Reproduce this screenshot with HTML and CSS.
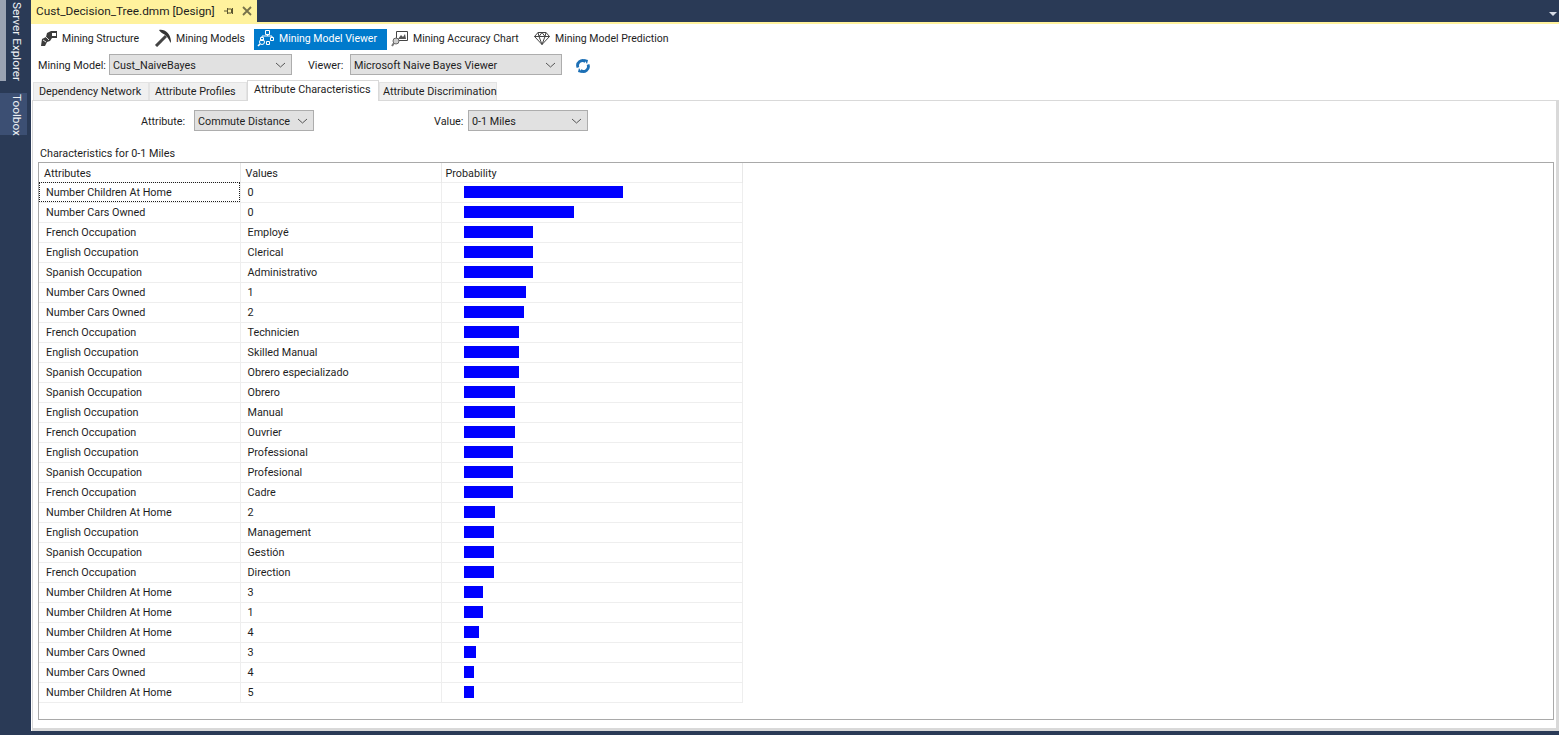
FILE: index.html
```html
<!DOCTYPE html>
<html lang="en">
<head>
    <meta charset="UTF-8">
    <title>Cust_Decision_Tree.dmm [Design]</title>
    <link rel="stylesheet" href="styles.css">
</head>
<body>
<aside class="rail">
    <div class="rail-tab rail-tab-server"><span class="rail-label">Server Explorer</span></div>
    <div class="rail-tab rail-tab-toolbox"><span class="rail-label">Toolbox</span></div>
</aside>

<div class="shell">
    <header class="doc-bar">
        <div class="doc-tab">
            <span class="doc-title">Cust_Decision_Tree.dmm [Design]</span>
            <svg class="doc-pin" width="10" height="10" viewBox="0 0 10 10"><path d="M0 5h3M3.500 2v6M3.500 3h4v4h-4M8.500 2v6" fill="none" stroke="#5b5530"/></svg>
            <svg class="doc-close" width="10" height="10" viewBox="0 0 10 10"><path d="M1 1l8 8M9 1l-8 8" stroke="#77714a" stroke-width="1.800"/></svg>
        </div>
        <div class="doc-menu"></div>
    </header>

    <main class="designer">
        <nav class="mode-bar">
            <div class="mode mode-structure">
                <svg width="18" height="18" viewBox="0 0 18 18"><path d="M1 17l1-7 4-2 1-4 4-2h6v7h-5l-2 3-3 1-2 4z" fill="#3c3c3c"/><path d="M12 4h4v3h-4z" fill="#fff"/><path d="M3 11l3 2M6 8l3 3" stroke="#ddd"/></svg>
                <span>Mining Structure</span>
            </div>
            <div class="mode mode-models">
                <svg width="18" height="18" viewBox="0 0 18 18"><path d="M2 17L12 7" stroke="#444" stroke-width="3"/><path d="M5 1c6-1 11 3 12 11l-.5 2c-2-5-4-7-6-8.500C8 4 6 3 5 1z" fill="#333"/></svg>
                <span>Mining Models</span>
            </div>
            <div class="mode mode-viewer">
                <svg width="18" height="18" viewBox="0 0 18 18" fill="none" stroke="#fff"><path d="M8.500 1.500h4v4h-4zM3.500 8.500h3v3h-3zM13.500 8.500h3v3h-3zM10.500 5.500v1.500M5 8.500V7h10v1.500M9.500 12.500h3v3h-3z"/><circle cx="5" cy="13" r="2.500"/><path d="M3 15l-2 2" stroke-width="1.600"/></svg>
                <span>Mining Model Viewer</span>
            </div>
            <div class="mode mode-accuracy">
                <svg width="18" height="18" viewBox="0 0 18 18"><path d="M5.500 2.500h11v9h-11z" fill="#fff" stroke="#444"/><path d="M7 10l3-4 2 2 2-3 1 5z" fill="#555"/><circle cx="5" cy="12" r="3" fill="#ccc" stroke="#666"/><path d="M3 14l-2 3" stroke="#777" stroke-width="2"/></svg>
                <span>Mining Accuracy Chart</span>
            </div>
            <div class="mode mode-prediction">
                <svg width="18" height="18" viewBox="0 0 18 18" fill="none" stroke="#444"><path d="M5 3.500h8l3.500 4L9 15.500 1.500 7.500z"/><path d="M1.500 7.500h15M6 7.500l3 8 3-8M5 3.500l1 4 3-4 3 4 1-4"/></svg>
                <span>Mining Model Prediction</span>
            </div>
        </nav>

        <div class="model-bar">
            <label class="model-label">Mining Model:</label>
            <div class="combo combo-model"><span>Cust_NaiveBayes</span><svg class="chev" width="11" height="6" viewBox="0 0 11 6"><path d="M1 1l4.500 4L10 1" fill="none" stroke="#555"/></svg></div>
            <label class="viewer-label">Viewer:</label>
            <div class="combo combo-viewer"><span>Microsoft Naive Bayes Viewer</span><svg class="chev" width="11" height="6" viewBox="0 0 11 6"><path d="M1 1l4.500 4L10 1" fill="none" stroke="#555"/></svg></div>
            <svg class="refresh" width="14" height="14" viewBox="0 0 14 14" fill="none" stroke="#1c6fb5" stroke-width="2.800"><path d="M2 8.500A5 5 0 0 1 9.500 2.500M12 5.500A5 5 0 0 1 4.500 11.500"/><path d="M8 0l4 1-1 4zM6 14l-4-1 1-4z" fill="#1c6fb5" stroke="none"/></svg>
        </div>

        <div class="tabs">
            <div class="tab tab-network">Dependency Network</div>
            <div class="tab tab-profiles">Attribute Profiles</div>
            <div class="tab tab-active">Attribute Characteristics</div>
            <div class="tab tab-discrimination">Attribute Discrimination</div>
        </div>

        <section class="panel">
            <div class="filter-bar">
                <label class="attr-label">Attribute:</label>
                <div class="combo combo-attr"><span>Commute Distance</span><svg class="chev" width="11" height="6" viewBox="0 0 11 6"><path d="M1 1l4.500 4L10 1" fill="none" stroke="#555"/></svg></div>
                <label class="value-label">Value:</label>
                <div class="combo combo-value"><span>0-1 Miles</span><svg class="chev" width="11" height="6" viewBox="0 0 11 6"><path d="M1 1l4.500 4L10 1" fill="none" stroke="#555"/></svg></div>
            </div>
            <div class="caption">Characteristics for 0-1 Miles</div>
            <div class="grid-frame">
                <table class="grid">
                    <thead>
                    <tr><th>Attributes</th><th>Values</th><th>Probability</th></tr>
                    </thead>
                    <tbody>
                    <tr class="current"><td>Number Children At Home</td><td>0</td><td><div class="bar" style="width:159px"></div></td></tr>
                    <tr><td>Number Cars Owned</td><td>0</td><td><div class="bar" style="width:110px"></div></td></tr>
                    <tr><td>French Occupation</td><td>Employé</td><td><div class="bar" style="width:69px"></div></td></tr>
                    <tr><td>English Occupation</td><td>Clerical</td><td><div class="bar" style="width:69px"></div></td></tr>
                    <tr><td>Spanish Occupation</td><td>Administrativo</td><td><div class="bar" style="width:69px"></div></td></tr>
                    <tr><td>Number Cars Owned</td><td>1</td><td><div class="bar" style="width:62px"></div></td></tr>
                    <tr><td>Number Cars Owned</td><td>2</td><td><div class="bar" style="width:60px"></div></td></tr>
                    <tr><td>French Occupation</td><td>Technicien</td><td><div class="bar" style="width:55px"></div></td></tr>
                    <tr><td>English Occupation</td><td>Skilled Manual</td><td><div class="bar" style="width:55px"></div></td></tr>
                    <tr><td>Spanish Occupation</td><td>Obrero especializado</td><td><div class="bar" style="width:55px"></div></td></tr>
                    <tr><td>Spanish Occupation</td><td>Obrero</td><td><div class="bar" style="width:51px"></div></td></tr>
                    <tr><td>English Occupation</td><td>Manual</td><td><div class="bar" style="width:51px"></div></td></tr>
                    <tr><td>French Occupation</td><td>Ouvrier</td><td><div class="bar" style="width:51px"></div></td></tr>
                    <tr><td>English Occupation</td><td>Professional</td><td><div class="bar" style="width:49px"></div></td></tr>
                    <tr><td>Spanish Occupation</td><td>Profesional</td><td><div class="bar" style="width:49px"></div></td></tr>
                    <tr><td>French Occupation</td><td>Cadre</td><td><div class="bar" style="width:49px"></div></td></tr>
                    <tr><td>Number Children At Home</td><td>2</td><td><div class="bar" style="width:31px"></div></td></tr>
                    <tr><td>English Occupation</td><td>Management</td><td><div class="bar" style="width:30px"></div></td></tr>
                    <tr><td>Spanish Occupation</td><td>Gestión</td><td><div class="bar" style="width:30px"></div></td></tr>
                    <tr><td>French Occupation</td><td>Direction</td><td><div class="bar" style="width:30px"></div></td></tr>
                    <tr><td>Number Children At Home</td><td>3</td><td><div class="bar" style="width:19px"></div></td></tr>
                    <tr><td>Number Children At Home</td><td>1</td><td><div class="bar" style="width:19px"></div></td></tr>
                    <tr><td>Number Children At Home</td><td>4</td><td><div class="bar" style="width:15px"></div></td></tr>
                    <tr><td>Number Cars Owned</td><td>3</td><td><div class="bar" style="width:12px"></div></td></tr>
                    <tr><td>Number Cars Owned</td><td>4</td><td><div class="bar" style="width:10px"></div></td></tr>
                    <tr><td>Number Children At Home</td><td>5</td><td><div class="bar" style="width:10px"></div></td></tr>
                    </tbody>
                </table>
            </div>
        </section>
    </main>
</div>
</body>
</html>
```

FILE: styles.css
```css
* {
    box-sizing: border-box;
}

html, body {
    height: 100%;
}

body {
    margin: 0;
    display: flex;
    height: 735px;
    overflow: hidden;
    background-color: #2a3a56;
    color: #1e1e1e;
    font-family: Roboto, "Liberation Sans", sans-serif;
    font-size: 10.8px;
}

/* left tool window rail */
.rail {
    width: 31px;
    flex-shrink: 0;
}

.rail-tab {
    width: 27px;
    display: flex;
    justify-content: flex-end;
    color: #f0f2f6;
    font-size: 11.8px;
}

.rail-tab-server {
    height: 81px;
    border-left: 6px solid #9aa3b3;
    padding-top: 2px;
}

.rail-tab-toolbox {
    height: 42px;
    margin-top: 12px;
    padding-top: 1px;
    background-color: #3c4f73;
}

.rail-label {
    writing-mode: vertical-rl;
    line-height: 17px;
    padding-right: 2px;
    white-space: nowrap;
}

.shell {
    flex: 1;
    min-width: 0;
    display: flex;
    flex-direction: column;
}

.doc-bar {
    height: 22px;
    display: flex;
    justify-content: space-between;
    flex-shrink: 0;
}

.doc-tab {
    width: 226px;
    display: flex;
    align-items: center;
    padding-left: 5px;
    background-color: #fff29d;
    color: #1e1e1e;
    font-size: 11.8px;
}

.doc-title {
    width: 188px;
    white-space: nowrap;
}

.doc-close {
    margin-left: 8px;
}

.doc-menu {
    width: 0;
    height: 0;
    margin: 12px 2px 0 0;
    border-left: 4px solid transparent;
    border-right: 4px solid transparent;
    border-top: 4px solid #d6dbe6;
}

.designer {
    height: 709px;
    padding-left: 1px;
    border-top: 2px solid #fff29d;
    background-color: #fff;
    display: flex;
    flex-direction: column;
}

.mode-bar {
    height: 28px;
    padding-top: 5px;
    display: flex;
    font-size: 10.5px;
}

.mode {
    height: 21px;
    padding-bottom: 3px;
    display: flex;
    align-items: center;
    gap: 4px;
    white-space: nowrap;
}

.mode-structure {
    margin-left: 8px;
    width: 114px;
}

.mode-models {
    width: 100px;
}

.mode-viewer {
    width: 133px;
    padding-left: 3px;
    background-color: #007acc;
    color: #fff;
}

.mode-accuracy {
    margin-left: 4px;
    width: 142px;
}

.model-bar {
    height: 26px;
    padding: 2px 0 0 6px;
    display: flex;
    align-items: flex-start;
}

.model-bar label, .filter-bar label {
    line-height: 23px;
    white-space: nowrap;
}

.model-label {
    width: 71px;
}

.viewer-label {
    margin-left: 16px;
    width: 42px;
}

.combo {
    height: 21px;
    display: flex;
    align-items: center;
    justify-content: space-between;
    padding: 1px 5px 0 3px;
    background-color: #e1e1e1;
    border: 1px solid #adadad;
    white-space: nowrap;
}

.combo-model {
    width: 183px;
}

.combo-viewer {
    width: 212px;
}

.combo-attr {
    width: 120px;
}

.combo-value {
    width: 120px;
}

.refresh {
    margin: 5px 0 0 14px;
}

.tabs {
    height: 21px;
    margin-top: 1px;
    padding-left: 1px;
    display: flex;
    align-items: flex-end;
    position: relative;
    z-index: 1;
}

.tab {
    height: 18px;
    line-height: 18px;
    padding-left: 5px;
    background-color: #f0f0f0;
    border: 1px solid #e3e3e3;
    border-bottom: none;
    white-space: nowrap;
}

.tab-network {
    width: 116px;
}

.tab-profiles {
    width: 98px;
}

.tab-active {
    width: 132px;
    height: 21px;
    margin-bottom: -1px;
    padding-left: 6px;
    background-color: #fff;
    border-color: #d9d9d9;
}

.tab-discrimination {
    width: 118px;
    padding-left: 3px;
}

.panel {
    flex: 1;
    min-height: 0;
    display: flex;
    flex-direction: column;
    border: 1px solid #d9d9d9;
    border-bottom-width: 3px;
    border-right-width: 3px;
}

.filter-bar {
    height: 31px;
    padding-top: 9px;
    display: flex;
    align-items: flex-start;
}

.attr-label {
    margin-left: 108px;
    width: 53px;
}

.value-label {
    margin-left: 120px;
    width: 34px;
}

.caption {
    margin: 11px 0 0 7px;
    height: 19px;
    line-height: 22px;
    white-space: nowrap;
}

.grid-frame {
    flex: 1;
    min-height: 0;
    margin: 0 2px 8px 5px;
    border: 1px solid #a9a9a9;
    background-color: #fff;
}

.grid {
    width: 704px;
    table-layout: fixed;
    border-collapse: collapse;
}

.grid th {
    height: 19px;
    padding: 2px 0 0 5px;
    font-weight: normal;
    text-align: left;
    border-right: 1px solid #e8e8e8;
}

.grid th:nth-child(1), .grid td:nth-child(1) {
    width: 201px;
}

.grid th:nth-child(2), .grid td:nth-child(2) {
    width: 201px;
}

.grid th:nth-child(3) {
    padding-left: 4px;
}

.grid td {
    height: 20px;
    padding: 0 0 0 7px;
    border: 1px solid #eeeeee;
    border-left: none;
    white-space: nowrap;
}

.grid td:nth-child(3) {
    padding: 0 0 0 22px;
}

.grid .current td:nth-child(1) {
    outline: 1px dotted #1e1e1e;
    outline-offset: -1px;
}

.bar {
    height: 12px;
    background-color: #0000ff;
}
```
